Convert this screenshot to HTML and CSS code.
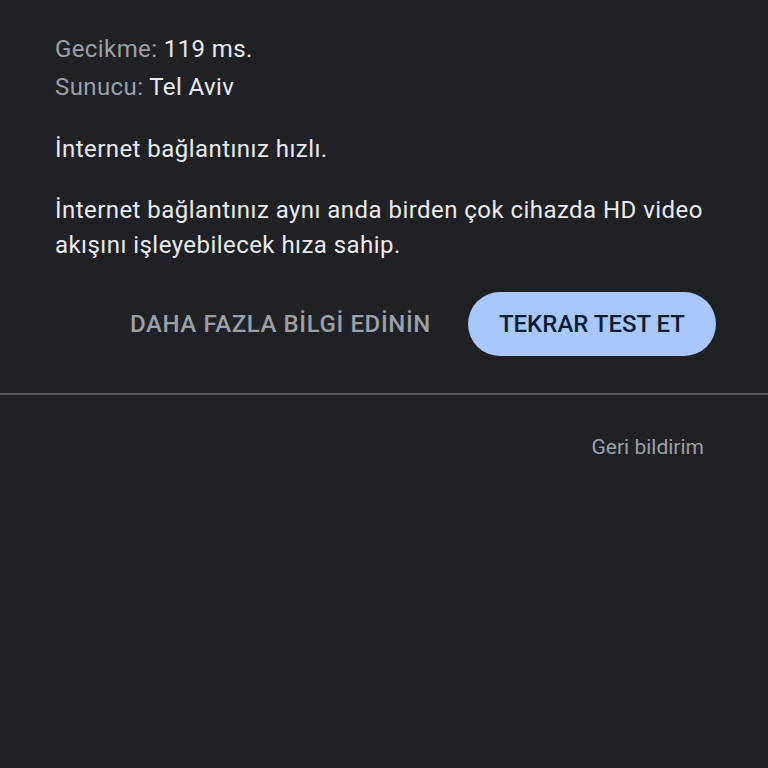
FILE: index.html
```html
<!DOCTYPE html>
<html lang="tr">
<head>
<meta charset="utf-8">
<link rel="stylesheet" href="styles.css">
</head>
<body>
<div class="page">
  <section class="result">
    <div class="stats">
      <div class="stat"><span class="label">Gecikme:</span> 119 ms.</div>
      <div class="stat"><span class="label">Sunucu:</span> Tel Aviv</div>
    </div>
    <p class="msg">İnternet bağlantınız hızlı.</p>
    <p class="msg">İnternet bağlantınız aynı anda birden çok cihazda HD video akışını işleyebilecek hıza sahip.</p>
    <div class="actions">
      <button class="btn-text">DAHA FAZLA BİLGİ EDİNİN</button>
      <button class="btn-fill">TEKRAR TEST ET</button>
    </div>
  </section>
  <div class="footer">
    <span class="feedback">Geri bildirim</span>
  </div>
</div>
</body>
</html>
```
FILE: styles.css
```css
html, body {
  margin: 0;
  padding: 0;
  background: #202124;
}
body {
  font-family: Roboto, "Noto Sans", sans-serif;
  color: #e8eaed;
  width: 768px;
  height: 768px;
  overflow: hidden;
}
.result {
  padding: 30px 52px 37px 55px;
  border-bottom: 2px solid #55575b;
}
.stats {
  display: flex;
  flex-direction: column;
}
.stat {
  font-size: 24px;
  line-height: 38px;
  letter-spacing: 0.4px;
}
.label {
  color: #9aa0a6;
}
.msg {
  margin: 0;
  font-size: 24px;
  line-height: 35px;
  letter-spacing: 0.45px;
}
.stats + .msg {
  margin-top: 26px;
}
.msg + .msg {
  margin-top: 26px;
}
.actions {
  display: flex;
  justify-content: flex-end;
  align-items: center;
  gap: 37px;
  margin-top: 29px;
}
button {
  font-family: Roboto, sans-serif;
  font-weight: 500;
  font-size: 24px;
  border: none;
  cursor: pointer;
}
.btn-text {
  background: none;
  color: #9aa0a6;
  padding: 0;
  letter-spacing: 0.6px;
}
.btn-fill {
  background: #a8c7fa;
  color: #0f1d33;
  height: 64px;
  padding: 0 31px;
  border-radius: 32px;
}
.footer {
  display: flex;
  justify-content: flex-end;
  padding: 38px 64px 0 0;
}
.feedback {
  color: #9aa0a6;
  font-size: 21px;
  line-height: 28px;
}
```
